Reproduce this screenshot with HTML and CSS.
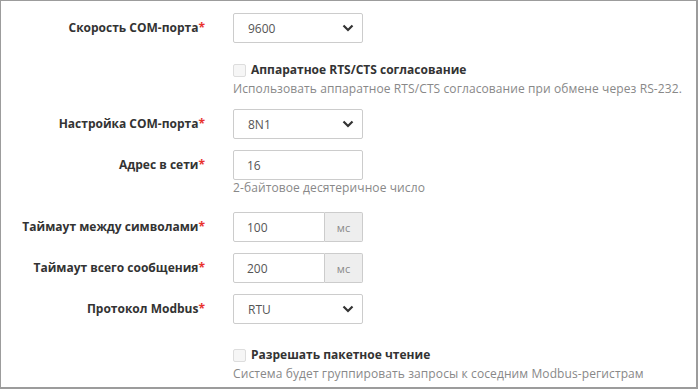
FILE: index.html
```html
<!DOCTYPE html>
<html lang="ru">

<head>
    <meta charset="UTF-8">
    <meta name="viewport" content="width=device-width, initial-scale=1.0">
    <title>Настройки COM-порта</title>
    <link rel="stylesheet" href="styles.css">
</head>

<body>
    <div class="panel">
        <div class="field">
            <label class="label">Скорость COM-порта<span class="req">*</span></label>
            <div class="select">
                <span>9600</span>
                <svg class="chevron" width="12" height="8" viewBox="0 0 12 8"><path d="M1.5 1.5 L6 6 L10.5 1.5" fill="none" stroke="#333" stroke-width="2.2"/></svg>
            </div>
        </div>

        <div class="check-group first">
            <div class="check">
                <span class="box"></span>
                <span class="check-title">Аппаратное RTS/CTS согласование</span>
            </div>
            <div class="hint">Использовать аппаратное RTS/CTS согласование при обмене через RS-232.</div>
        </div>

        <div class="field">
            <label class="label">Настройка COM-порта<span class="req">*</span></label>
            <div class="select">
                <span>8N1</span>
                <svg class="chevron" width="12" height="8" viewBox="0 0 12 8"><path d="M1.5 1.5 L6 6 L10.5 1.5" fill="none" stroke="#333" stroke-width="2.2"/></svg>
            </div>
        </div>

        <div class="field with-hint">
            <label class="label">Адрес в сети<span class="req">*</span></label>
            <div class="control">
                <div class="input">16</div>
                <div class="hint">2-байтовое десятеричное число</div>
            </div>
        </div>

        <div class="field">
            <label class="label">Таймаут между символами<span class="req">*</span></label>
            <div class="input-group">
                <div class="input">100</div>
                <div class="addon">мс</div>
            </div>
        </div>

        <div class="field">
            <label class="label">Таймаут всего сообщения<span class="req">*</span></label>
            <div class="input-group">
                <div class="input">200</div>
                <div class="addon">мс</div>
            </div>
        </div>

        <div class="field">
            <label class="label">Протокол Modbus<span class="req">*</span></label>
            <div class="select">
                <span>RTU</span>
                <svg class="chevron" width="12" height="8" viewBox="0 0 12 8"><path d="M1.5 1.5 L6 6 L10.5 1.5" fill="none" stroke="#333" stroke-width="2.2"/></svg>
            </div>
        </div>

        <div class="check-group last">
            <div class="check">
                <span class="box"></span>
                <span class="check-title">Разрешать пакетное чтение</span>
            </div>
            <div class="hint">Система будет группировать запросы к соседним Modbus-регистрам</div>
        </div>
    </div>
</body>

</html>
```

FILE: styles.css
```css
body {
    margin: 0;
    padding: 0;
    font-family: 'Open Sans', 'Noto Sans', sans-serif;
    font-size: 12px;
    color: #333;
    background-color: #fff;
}

.panel {
    box-sizing: border-box;
    width: 698px;
    height: 389px;
    border: 1px solid #9c9c9c;
    border-right-width: 2px;
    border-bottom-width: 2px;
    padding-top: 12px;
    overflow: hidden;
}

.field {
    display: grid;
    grid-template-columns: 204px 130px;
    column-gap: 28px;
    align-items: start;
    margin-bottom: 11px;
}

.label {
    text-align: right;
    font-weight: bold;
    line-height: 30px;
    color: #333;
}

.req {
    color: #e8322e;
}

.select,
.input,
.addon {
    box-sizing: border-box;
    height: 30px;
    border: 1px solid #ccc;
    border-radius: 2px;
    color: #555;
    display: flex;
    align-items: center;
}

.select {
    justify-content: space-between;
    padding: 0 8px 0 14px;
}

.input {
    padding-left: 13px;
}

.input-group {
    display: flex;
}

.input-group .input {
    width: 92px;
    border-radius: 2px 0 0 2px;
}

.addon {
    width: 38px;
    border-left: none;
    border-radius: 0 2px 2px 0;
    background-color: #eee;
    justify-content: center;
    color: #888;
    font-size: 11px;
}

.with-hint {
    margin-bottom: 16px;
}

.hint {
    color: #888;
    line-height: 16px;
    white-space: nowrap;
    letter-spacing: 0.1px;
}

.check-group {
    margin-left: 232px;
}

.check-group .hint {
    margin-top: 2px;
}

.check-group.first {
    padding-top: 7px;
    margin-bottom: 12px;
}

.check-group.last {
    padding-top: 11px;
}

.check {
    display: flex;
    align-items: center;
    gap: 5px;
    line-height: 18px;
}

.box {
    box-sizing: border-box;
    width: 13px;
    height: 13px;
    border: 1px solid #ddd;
    border-radius: 2px;
    background-color: #f6f6f6;
}

.check-title {
    font-weight: bold;
    color: #333;
}
```
